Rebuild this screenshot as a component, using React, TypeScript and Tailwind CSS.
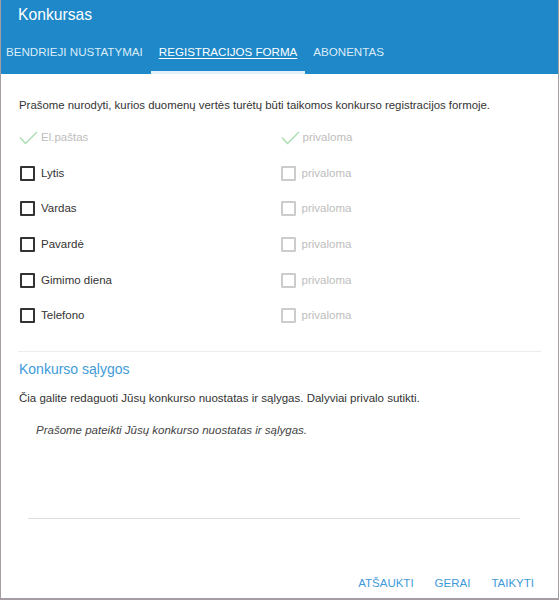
import React from "react";

const fields = ["Lytis", "Vardas", "Pavardė", "Gimimo diena", "Telefono"];

function Check() {
  return (
    <svg width="19" height="14" viewBox="0 0 19 14" className="shrink-0">
      <path d="M1 6.5 L6.5 12.5 L18 1" fill="none" stroke="#a8dcb0" strokeWidth="1.4" />
    </svg>
  );
}

function Box({ disabled }: { disabled?: boolean }) {
  return (
    <span
      className={`box-border inline-block h-[15px] w-[15px] shrink-0 rounded-[1px] border-2 ${
        disabled ? "border-[#cccccc]" : "border-[#333333]"
      }`}
    />
  );
}

export default function App() {
  return (
    <div
      className="box-border flex h-[600px] w-[559px] flex-col border-x border-b-2 border-[#a69ca4] bg-white"
      style={{ fontFamily: '"Liberation Sans", Arial, sans-serif' }}
    >
      <div className="flex h-[74px] shrink-0 flex-col bg-[#1e88c8]">
        <div className="flex h-[30px] items-center pl-[17px] text-[15.7px] text-white">Konkursas</div>
        <div className="ml-[-3px] flex h-[44px] items-stretch pt-[3px] text-[11.6px] text-[#dcecf8]">
          <div className="flex items-center border-b-[3px] border-transparent px-[8px]">BENDRIEJI NUSTATYMAI</div>
          <div className="flex items-center border-b-[3px] border-[#e3f1fb] px-[8px] text-white">
            <span className="underline underline-offset-2">REGISTRACIJOS FORMA</span>
          </div>
          <div className="flex items-center border-b-[3px] border-transparent px-[8px]">ABONENTAS</div>
        </div>
      </div>

      <div className="flex flex-1 flex-col px-[18px]">
        <p className="pt-[23px] text-[11.4px] leading-4 text-[#333333]">
          Prašome nurodyti, kurios duomenų vertės turėtų būti taikomos konkurso registracijos formoje.
        </p>

        <div className="mt-[7px] flex flex-col">
          <div className="grid h-[35.6px] grid-cols-2 items-center text-[11.5px] text-[#bdbdbd]">
            <div className="flex items-center gap-[3px]">
              <Check />
              <span>El.paštas</span>
            </div>
            <div className="flex items-center gap-[3px] pl-[1px]">
              <Check />
              <span>privaloma</span>
            </div>
          </div>
          {fields.map((f) => (
            <div key={f} className="grid h-[35.6px] grid-cols-2 items-center text-[11.5px]">
              <div className="flex items-center gap-[6px] pl-[1px] text-[#333333]">
                <Box />
                <span>{f}</span>
              </div>
              <div className="flex items-center gap-[6px] pl-[1px] text-[#bdbdbd]">
                <Box disabled />
                <span>privaloma</span>
              </div>
            </div>
          ))}
        </div>

        <div className="mx-[-1px] mt-[17px] h-px bg-[#ececec]" />
        <h2 className="mt-[9px] text-[14px] leading-4 text-[#3d9bd9]">Konkurso sąlygos</h2>
        <p className="mt-[13px] text-[11.5px] leading-4 text-[#333333]">
          Čia galite redaguoti Jūsų konkurso nuostatas ir sąlygas. Dalyviai privalo sutikti.
        </p>
        <p className="mt-[16px] pl-[17px] text-[11.5px] italic leading-4 text-[#444444]">
          Prašome pateikti Jūsų konkurso nuostatas ir sąlygas.
        </p>
        <div className="ml-[9px] mt-[80px] h-px w-[492px] bg-[#dddddd]" />

        <div className="mr-[-2px] mt-[56px] flex justify-end gap-[5px] text-[11.5px] leading-4 text-[#3d9bd9]">
          <button className="px-[8px]">ATŠAUKTI</button>
          <button className="px-[8px]">GERAI</button>
          <button className="px-[8px]">TAIKYTI</button>
        </div>
      </div>
    </div>
  );
}
